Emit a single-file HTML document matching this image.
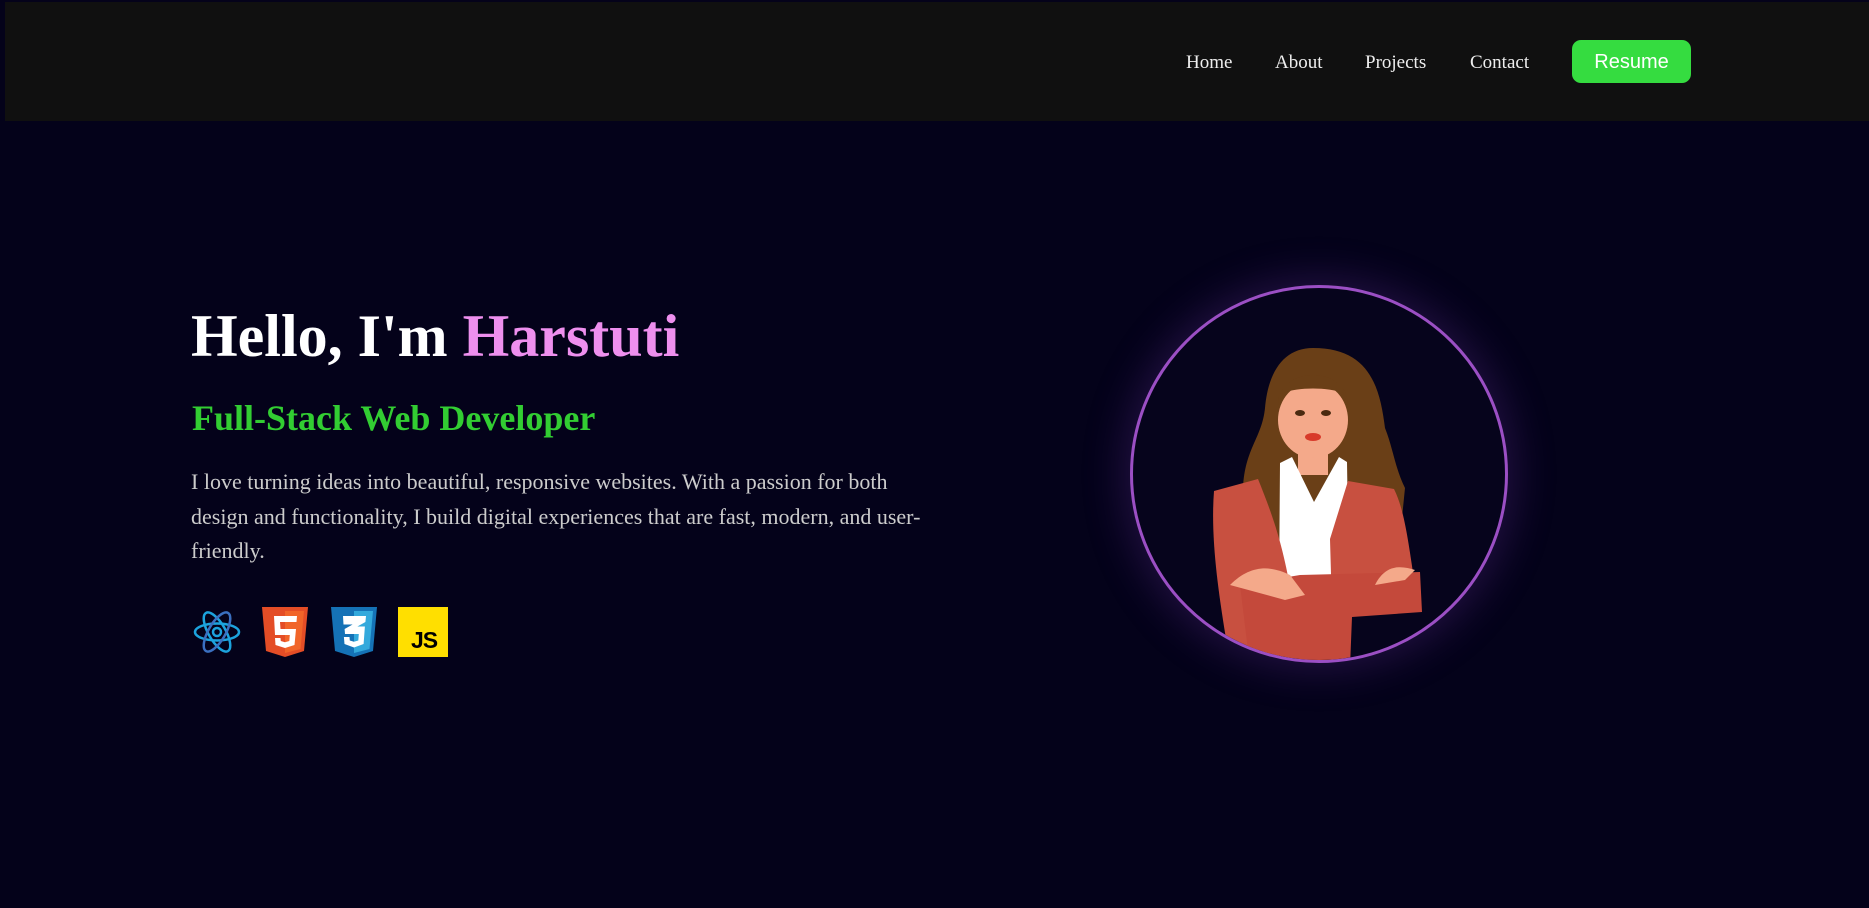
<!DOCTYPE html>
<html><head><meta charset="utf-8"><style>
*{margin:0;padding:0;box-sizing:border-box}
html,body{width:1869px;height:908px;overflow:hidden;background:#04021a;font-family:"Liberation Serif",serif}
.nav{position:absolute;left:5px;top:2px;width:1864px;height:119px;background:#101010}
.nav a{position:absolute;top:50px;color:#eee;font-size:19px;text-decoration:none}
.btn{position:absolute;width:119px;height:43px;background:#35dc40;border-radius:9px;color:#fff;font-family:"Liberation Sans",sans-serif;font-size:20px;text-align:center;line-height:45px}
h1{position:absolute;left:191px;top:298px;font-size:60px;font-weight:bold;color:#fff;white-space:nowrap;line-height:76px}
h1 span{color:#ee8fee}
h2{position:absolute;left:192px;top:397px;font-size:36px;font-weight:bold;color:#32cd32;white-space:nowrap}
p{position:absolute;left:191px;top:465px;width:750px;font-size:22px;line-height:34.5px;color:#ccc}
.ic{position:absolute;top:607px;height:50px}
.circle{position:absolute;left:1130px;top:285px;width:378px;height:378px;border-radius:50%;border:3px solid #9b4fc4;box-shadow:0 0 40px 8px rgba(120,60,180,.25);overflow:hidden;background:#06041c}
</style></head><body>
<div class="nav">
<a style="left:1181px">Home</a>
<a style="left:1270px">About</a>
<a style="left:1360px">Projects</a>
<a style="left:1465px">Contact</a>
<div class="btn" style="left:1567px;top:38px">Resume</div>
</div>
<h1>Hello, I'm <span>Harstuti</span></h1>
<h2>Full-Stack Web Developer</h2>
<p>I love turning ideas into beautiful, responsive websites. With a passion for both design and functionality, I build digital experiences that are fast, modern, and user-friendly.</p>
<svg class="ic" style="left:192px" width="50" height="50" viewBox="0 0 50 50"><g fill="none" stroke="#1ca3dd" stroke-width="2.5"><ellipse cx="25" cy="25" rx="22" ry="8.5"/><ellipse cx="25" cy="25" rx="22" ry="8.5" transform="rotate(60 25 25)"/><ellipse cx="25" cy="25" rx="22" ry="8.5" transform="rotate(-60 25 25)" stroke="#3a6fc0"/><circle cx="25" cy="25" r="4"/></g></svg>
<svg class="ic" style="left:262px" width="46" height="50" viewBox="0 0 46 50"><path d="M0 0h46l-4 44-19 6-19-6z" fill="#e44d26"/><path d="M23 4h19l-3.5 38L23 46z" fill="#f16529"/><path d="M12 9h23l-.5 6H18l.5 7h15.5l-1.5 16-9.5 3-9.5-3-.5-7h5.5l.3 3 4.2 1.3 4.3-1.3.5-6H13z" fill="#fff"/></svg>
<svg class="ic" style="left:331px" width="46" height="50" viewBox="0 0 46 50"><path d="M0 0h46l-4 44-19 6-19-6z" fill="#1572b6"/><path d="M23 4h19l-3.5 38L23 46z" fill="#33a9dc"/><path d="M12 9h23l-.6 6-8 4.5h7.5l-1.3 17.5-9.6 3.5-9.5-3.5-.6-7h5.6l.3 3.5 4.2 1.3 4.3-1.3.5-6.5H14l-.4-5 8-4.5H12.5z" fill="#fff"/></svg>
<div class="ic" style="left:398px;width:50px;background:#ffdf00"><span style="position:absolute;left:13px;top:20px;font:bold 23px 'Liberation Sans',sans-serif;color:#000;letter-spacing:-1px">JS</span></div>
<div class="circle">
<svg width="378" height="378" viewBox="0 0 378 378" style="position:absolute;left:-3px;top:-3px">
<path d="M183 63c-30 0-45 25-48 60-3 30-20 40-22 80l2 100 150 0 10-100c-10-20-12-40-20-60-5-40-15-80-72-80z" fill="#6a3f17"/>
<rect x="168" y="150" width="30" height="40" fill="#f4a98a"/>
<path d="M150 178l12-6 22 45 25-45 8 5 2 130h-70z" fill="#fff"/>
<path d="M84 206l44-12c12 30 24 60 33 114l1 70H100c-10-60-20-120-16-172z" fill="#c85040"/>
<path d="M218 196l46 8c10 20 14 50 20 90l-2 20-70 10h-10l-2-70z" fill="#c85040"/>
<path d="M110 300l60-10 120-3 2 40-70 5-2 50H120z" fill="#c4493b"/>
<path d="M100 300c20-20 40-20 60-10l15 20-20 5z" fill="#f4a98a"/>
<path d="M245 300c10-20 25-20 40-15l-10 10z" fill="#f4a98a"/>
<ellipse cx="183" cy="135" rx="35" ry="38" fill="#f4a98a"/>
<path d="M148 120c0-40 70-40 70 0l-5-12c-15-6-45-6-60 0z" fill="#6a3f17"/>
<ellipse cx="170" cy="128" rx="5" ry="3" fill="#4a2a10"/><ellipse cx="196" cy="128" rx="5" ry="3" fill="#4a2a10"/>
<ellipse cx="183" cy="152" rx="8" ry="4" fill="#d83a2a"/>
</svg>
</div>
</body></html>
